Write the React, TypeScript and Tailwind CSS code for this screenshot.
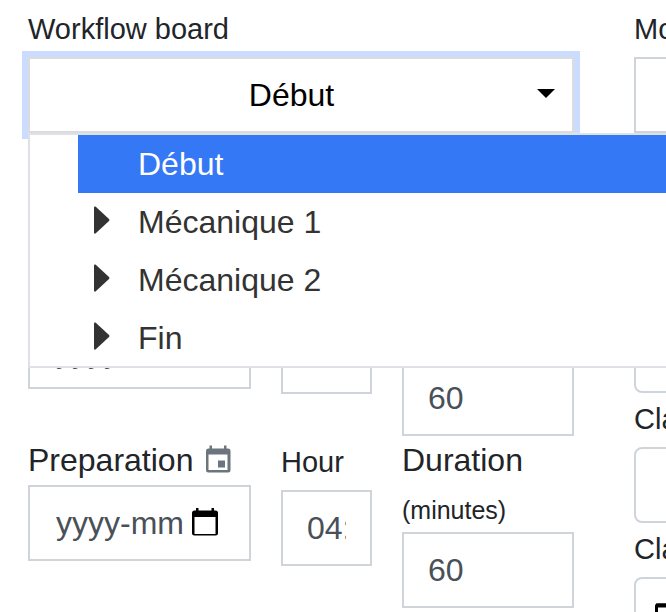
import { useState } from "react";

const box = "h-[76px] w-full border-2 border-[#ced4da] bg-white";
const field = `${box} block px-6 text-[32px] text-[#495057] outline-none`;
const smallLabel = "mb-0.5 block text-[29px] leading-[52px]";

const steps = ["Début", "Mécanique 1", "Mécanique 2", "Fin"];

function EventIcon() {
  return (
    <svg className="mb-1" width="26" height="28" viewBox="0 0 26 28" fill="#6c757d" aria-hidden="true">
      <path
        fillRule="evenodd"
        d="M4.500 0.500h2.500v3h12v-3h2.500v3h1.500a2.500 2.500 0 0 1 2.500 2.500v19a2.500 2.500 0 0 1-2.500 2.500H3.500A2.500 2.500 0 0 1 1 25V6a2.500 2.500 0 0 1 2.500-2.500h1zM3.500 9.500V25h19V9.500z"
      />
      <path d="M13 15.500h7v7h-7z" />
    </svg>
  );
}

function CalendarIcon() {
  return (
    <svg width="26" height="28" viewBox="0 0 26 28" fill="#000" aria-hidden="true">
      <path
        fillRule="evenodd"
        d="M4 0h2.500v2.500h13V0H22v2.500h1.500A2.500 2.500 0 0 1 26 5v20a2.500 2.500 0 0 1-2.500 2.500h-21A2.500 2.500 0 0 1 0 25V5a2.500 2.500 0 0 1 2.500-2.500H4zM2.500 9v17h21V9z"
      />
    </svg>
  );
}

function WorkflowSelect() {
  const [value, setValue] = useState("Début");
  const [open, setOpen] = useState(true);

  return (
    <div className="relative">
      <button
        id="workflow"
        type="button"
        aria-expanded={open}
        onClick={() => setOpen(!open)}
        className="flex h-[76px] w-full items-center border-2 border-[#dcdcdc] bg-white pr-[17px] pl-4 text-[32px] text-black ring-6 ring-[#ccdcfe]"
      >
        <span className="flex-1 text-center">{value}</span>
        <svg className="mb-1" width="18" height="9" viewBox="0 0 18 9" aria-hidden="true">
          <path d="M0 0h18L9 9z" />
        </svg>
      </button>

      {open && (
        <ul className="absolute top-full left-0 z-10 h-[235px] w-screen border-2 border-[#dee2e6] bg-white pl-12">
          {steps.map((step) => (
            <li key={step}>
              <button
                type="button"
                onClick={() => setValue(step)}
                className={
                  step === value
                    ? "flex h-[58px] w-full items-center bg-[#3478f6] pl-4 text-[32px] text-white"
                    : "flex h-[58px] w-full items-center pl-4 text-[32px] text-[#333]"
                }
              >
                <span className="w-11 pb-1">
                  {step !== steps[0] && (
                    <svg width="16" height="28" viewBox="0 0 16 28" fill="#333" aria-hidden="true">
                      <path d="M0 1.500Q0 0 1.500 0.500L15 13Q16 14 15 15L1.500 27.500Q0 28 0 26.500z" />
                    </svg>
                  )}
                </span>
                {step}
              </button>
            </li>
          ))}
        </ul>
      )}
    </div>
  );
}

function ScheduleRow({ id }: { id: string }) {
  return (
    <div className="grid grid-cols-[minmax(0,223fr)_minmax(0,91fr)_minmax(0,172fr)] items-start gap-x-[30px]">
      <div>
        <label htmlFor={`${id}-date`} className="flex items-center gap-3 text-[32px] leading-[49px]">
          Preparation
          <EventIcon />
        </label>
        <div className={`${box} flex items-center gap-[7px] pr-[31px] pl-[26px]`}>
          <input
            id={`${id}-date`}
            defaultValue="yyyy-mm"
            className="min-w-0 flex-1 text-[32px] text-[#495057] outline-none"
          />
          <button type="button" aria-label="Preparation" className="pb-0.5">
            <CalendarIcon />
          </button>
        </div>
      </div>
      <div>
        <label htmlFor={`${id}-hour`} className={smallLabel}>
          Hour
        </label>
        <input id={`${id}-hour`} defaultValue="04:" className={field} />
      </div>
      <div>
        <label htmlFor={`${id}-duration`} className="block text-[32px] leading-[48px]">
          Duration
          <br />
          <span className="text-[25px] leading-none">(minutes)</span>
        </label>
        <input id={`${id}-duration`} defaultValue="60" className={field} />
      </div>
    </div>
  );
}

function SideField({ id, label, rounded = true }: { id: string; label: string; rounded?: boolean }) {
  return (
    <div className="w-64">
      <label htmlFor={id} className={smallLabel}>
        {label}
      </label>
      <input id={id} className={rounded ? `${field} rounded-lg` : field} />
    </div>
  );
}

export default function App() {
  return (
    <main className="grid h-screen grid-cols-[minmax(0,1fr)_32px] gap-x-[60px] overflow-hidden bg-white pt-[3px] pl-7 font-['Liberation_Sans',Arial,sans-serif] text-[#212529]">
      <div>
        <label htmlFor="workflow" className={smallLabel}>
          Workflow board
        </label>
        <WorkflowSelect />
        <div className="mt-[131px]">
          <ScheduleRow id="first" />
          <ScheduleRow id="second" />
        </div>
      </div>

      <div>
        <SideField id="mo" label="Mo" rounded={false} />
        <SideField id="cla-1" label="Cla" />
        <SideField id="cla-2" label="Cla" />
        <SideField id="cla-3" label="Cla" />
        <div className="w-64">
          <label htmlFor="cla-4" className={smallLabel}>
            Cla
          </label>
          <button id="cla-4" type="button" className={`${box} flex items-center rounded-lg pl-[19px]`}>
            <svg width="26" height="24" viewBox="0 0 26 24" aria-hidden="true">
              <rect x="1.500" y="2" width="23" height="20" rx="1" fill="none" stroke="#000" strokeWidth="3" />
              <path d="M1 0.500h24v4H1z" />
            </svg>
          </button>
        </div>
      </div>
    </main>
  );
}
